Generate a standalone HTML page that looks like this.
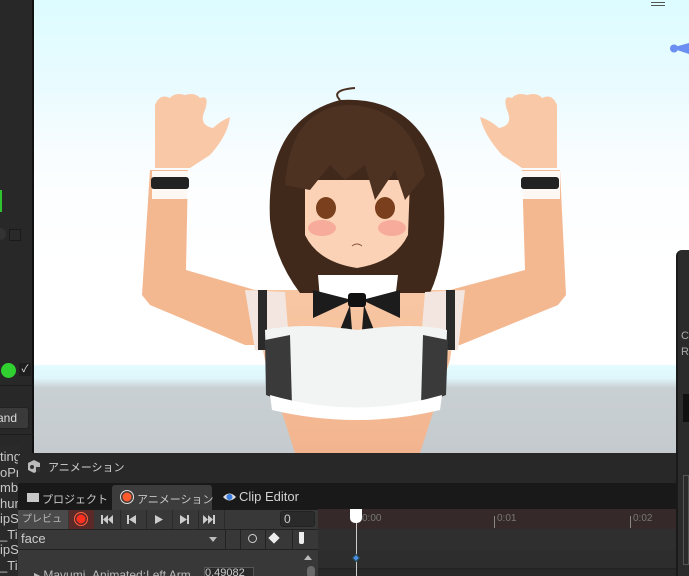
<!DOCTYPE html>
<html><head><meta charset="utf-8"><style>
*{margin:0;padding:0;box-sizing:border-box}
html,body{width:689px;height:576px;overflow:hidden}
body{background:#282828;position:relative;font-family:"Liberation Sans","Noto Sans CJK JP",sans-serif;color:#c8c8c8;font-size:12px}
.a{position:absolute}
</style></head><body>
<div class="a" style="left:0;top:0;width:33px;height:460px;background:#282828"></div>
<div class="a" style="left:32px;top:0;width:2px;height:460px;background:#111"></div>
<div class="a" style="left:0;top:190px;width:2px;height:22px;background:#2fc42f"></div>
<div class="a" style="left:-6px;top:228px;width:12px;height:12px;border-radius:6px;background:#333"></div>
<div class="a" style="left:9px;top:229px;width:12px;height:12px;border:1px solid #1a1a1a;background:#2a2a2a"></div>
<div class="a" style="left:1px;top:363px;width:15px;height:15px;border-radius:8px;background:#2fd02f"></div>
<div class="a" style="left:19px;top:363px;width:12px;height:13px;background:#1e1e1e;color:#eee;font-size:10px;line-height:13px;text-align:center">✓</div>
<div class="a" style="left:0;top:385px;width:33px;height:1px;background:#1c1c1c"></div>
<div class="a" style="left:-4px;top:407px;width:33px;height:22px;background:#3a3a3a;border:1px solid #222;border-radius:3px;font-size:12px;line-height:20px;color:#ddd">and</div>
<div class="a" style="left:0;top:434px;width:33px;height:1px;background:#1c1c1c"></div>
<div class="a" style="left:34px;top:0;width:655px;height:453px;background:linear-gradient(#dcfcff 0,#eafbff 90px,#fafdff 160px,#fff 260px,#fff 364px,#e2fbff 366px,#dff6fb 378px,#c9d0d3 388px,#c4cacd 453px)"></div>
<div class="a" style="left:651px;top:2px;width:14px;height:1px;background:#555;box-shadow:0 3px 0 #555"></div>
<svg class="a" style="left:665px;top:40px" width="24" height="18"><path d="M6 8 L24 3 L24 14 Z" fill="#6a8ef2"/><circle cx="9" cy="8.5" r="4" fill="#6a8ef2"/></svg>
<svg class="a" style="left:0;top:0" width="689" height="453">
<defs><linearGradient id="sk" x1="0" y1="0" x2="0" y2="1"><stop offset="0" stop-color="#f8c7a4"/><stop offset="1" stop-color="#f2b48e"/></linearGradient></defs>
<path d="M150 170 L188 170 L186 270 L255 290 L262 345 L245 345 L150 305 L142 295 Z" fill="#f4b891"/>
<path d="M522 170 L560 170 L566 295 L558 305 L460 345 L445 345 L450 290 L525 270 Z" fill="#f4b891"/>
<path d="M155 105 Q160 93 170 98 Q175 92 185 95 Q195 92 200 98 Q210 94 205 110 Q198 125 213 128 Q222 120 230 117 Q228 135 210 155 L190 168 L155 168 Z" fill="#f9c9a7"/>
<path d="M557 105 Q552 93 542 98 Q537 92 527 95 Q517 92 512 98 Q502 94 507 110 Q514 125 499 128 Q490 120 480 117 Q484 135 502 155 L522 168 L557 168 Z" fill="#f9c9a7"/>
<rect x="152" y="171" width="36" height="28" fill="#fff" opacity=".9"/><rect x="151" y="177" width="38" height="12" rx="3" fill="#222"/>
<rect x="522" y="171" width="38" height="28" fill="#fff" opacity=".9"/><rect x="521" y="177" width="38" height="12" rx="3" fill="#222"/>
<path d="M250 290 L460 290 L450 360 L420 453 L295 453 L265 360 Z" fill="url(#sk)"/>
<rect x="330" y="255" width="54" height="40" fill="#f2b890"/>
<path d="M270 220 Q265 120 340 100 Q420 95 442 180 Q450 250 430 293 L300 293 Q275 260 270 220 Z" fill="#40291b"/>
<path d="M305 180 L410 180 L408 235 Q395 262 357 268 Q318 262 305 235 Z" fill="#fbd2b5"/>
<ellipse cx="322" cy="228" rx="14" ry="8" fill="#f59a90" opacity=".7"/>
<ellipse cx="392" cy="228" rx="14" ry="8" fill="#f59a90" opacity=".7"/>
<ellipse cx="326" cy="208" rx="10" ry="11" fill="#7a3f1c"/>
<ellipse cx="385" cy="208" rx="10" ry="11" fill="#7a3f1c"/>
<path d="M352 246 Q357 242 362 246" stroke="#8a5040" fill="none"/>
<path d="M285 185 Q290 110 345 105 Q410 105 425 175 L405 200 L395 170 L375 200 L365 165 L345 180 L330 165 L310 190 Z" fill="#4d3121"/>
<path d="M340 100 Q330 90 355 88" stroke="#4a3020" stroke-width="2" fill="none"/>
<path d="M245 290 L285 292 L290 352 L255 350 Z" fill="#f3e6e0"/><rect x="258" y="290" width="9" height="60" fill="#2a2a2a"/>
<path d="M425 292 L465 290 L458 350 L420 352 Z" fill="#f3e6e0"/><rect x="446" y="290" width="9" height="60" fill="#2a2a2a"/>
<path d="M318 275 L398 275 L395 300 L320 300 Z" fill="#fff"/>
<path d="M313 290 L352 300 L313 318 Z M400 290 L362 300 L400 318 Z" fill="#1c1c1c"/>
<rect x="348" y="293" width="18" height="14" rx="3" fill="#111"/>
<path d="M350 305 L340 330 L352 330 Z M364 305 L374 330 L362 330 Z" fill="#1c1c1c"/>
<path d="M265 330 Q300 322 357 330 Q415 322 447 330 L445 395 Q420 412 357 408 Q295 412 267 395 Z" fill="#f2f4f4"/>
<path d="M265 340 L290 335 L292 405 L266 395 Z M448 340 L423 335 L421 405 L446 395 Z" fill="#3a3a3a"/>
<path d="M270 395 Q357 420 442 395 L440 410 Q357 430 272 410 Z" fill="#fff"/>
</svg>
<div class="a" style="left:0;top:446px;width:20px;height:130px;background:#2a2a2a;font-size:13px;line-height:15.5px;color:#c8c8c8;overflow:hidden;white-space:nowrap;padding-top:3px">ting<br>oPr<br>mb<br>hur<br>ipS<br>_Ti<br>ipS<br>_Ti</div>
<div class="a" style="left:18px;top:453px;width:671px;height:123px;background:#282828;border-radius:6px 0 0 0"></div>
<svg class="a" style="left:27px;top:459px" width="15" height="15"><path d="M7 1 L13 4 L13 11 L7 14 L1 11 L1 4 Z" fill="#bbb"/><circle cx="5" cy="8" r="2" fill="#333"/><rect x="9" y="8" width="4" height="5" fill="#333"/></svg>
<div class="a" style="left:48px;top:459px;font-size:11px;color:#d2d2d2">アニメーション</div>
<div class="a" style="left:18px;top:483px;width:671px;height:27px;background:#191919"></div>
<div class="a" style="left:112px;top:485px;width:100px;height:25px;background:#3c3c3c;border-radius:3px 3px 0 0"></div>
<div class="a" style="left:27px;top:493px;width:12px;height:9px;background:#c8c8c8"></div>
<div class="a" style="left:42px;top:491px;font-size:11px;color:#c8c8c8">プロジェクト</div>
<div class="a" style="left:120px;top:490px;width:14px;height:14px;border-radius:7px;border:1.5px solid #ddd;background:#ff5a2c;box-shadow:inset 0 0 0 1.5px #3c3c3c"></div>
<div class="a" style="left:137px;top:491px;font-size:11px;color:#c8c8c8">アニメーション</div>
<svg class="a" style="left:222px;top:491px" width="15" height="12"><path d="M1 6 Q7.5 -1 14 6 Q7.5 13 1 6Z" fill="#ddd"/><circle cx="7.5" cy="6" r="3" fill="#3a7de0"/></svg>
<div class="a" style="left:239px;top:489px;font-size:13px;color:#d2d2d2">Clip Editor</div>
<div class="a" style="left:18px;top:510px;width:300px;height:19px;background:#383838"></div>
<div class="a" style="left:18px;top:510px;width:50px;height:19px;background:#4a4a4a;font-size:10px;line-height:19px;color:#bbb;padding-left:4px">プレビュー</div>
<div class="a" style="left:69px;top:510px;width:25px;height:19px;background:#5a2a28"></div>
<div class="a" style="left:74px;top:512px;width:14px;height:14px;border-radius:7px;border:1.5px solid #ff6040;background:#ff3020;box-shadow:inset 0 0 0 1.5px #5a2a28"></div>
<svg class="a" style="left:95px;top:510px" width="130" height="19" fill="#ccc">
<rect x="25" y="0" width="1" height="19" fill="#2a2a2a"/><rect x="51" y="0" width="1" height="19" fill="#2a2a2a"/><rect x="77" y="0" width="1" height="19" fill="#2a2a2a"/><rect x="103" y="0" width="1" height="19" fill="#2a2a2a"/><rect x="129" y="0" width="1" height="19" fill="#2a2a2a"/>
<rect x="6" y="5" width="2" height="9"/><path d="M13 5 L8 9.5 L13 14Z M18 5 L13 9.5 L18 14Z"/>
<rect x="32" y="5" width="2" height="9"/><path d="M41 5 L34 9.5 L41 14Z"/>
<path d="M60 5 L68 9.5 L60 14Z"/>
<path d="M85 5 L92 9.5 L85 14Z"/><rect x="92" y="5" width="2" height="9"/>
<path d="M108 5 L113 9.5 L108 14Z M113 5 L118 9.5 L113 14Z"/><rect x="118" y="5" width="2" height="9"/>
</svg>
<div class="a" style="left:280px;top:511px;width:35px;height:16px;background:#2a2a2a;border:1px solid #222;border-radius:3px;color:#ccc;font-size:12px;line-height:14px;padding-left:3px">0</div>
<div class="a" style="left:318px;top:509px;width:358px;height:20px;background:#352a29"></div>
<div class="a" style="left:362px;top:513px;font-size:10px;color:#777">0:00</div>
<div class="a" style="left:494px;top:516px;width:1px;height:12px;background:#888"></div>
<div class="a" style="left:497px;top:513px;font-size:10px;color:#777">0:01</div>
<div class="a" style="left:630px;top:516px;width:1px;height:12px;background:#888"></div>
<div class="a" style="left:633px;top:513px;font-size:10px;color:#777">0:02</div>
<div class="a" style="left:18px;top:529px;width:300px;height:21px;background:#383838;border-top:1px solid #222;border-bottom:1px solid #222"></div>
<div class="a" style="left:21px;top:531px;font-size:13px;color:#ccc">face</div>
<div class="a" style="left:209px;top:537px;border:4px solid transparent;border-top:5px solid #bbb"></div>
<div class="a" style="left:225px;top:529px;width:1px;height:21px;background:#222"></div>
<div class="a" style="left:240px;top:529px;width:1px;height:21px;background:#222"></div>
<div class="a" style="left:265px;top:529px;width:1px;height:21px;background:#222"></div>
<div class="a" style="left:292px;top:529px;width:1px;height:21px;background:#222"></div>
<div class="a" style="left:248px;top:534px;width:9px;height:9px;border:1px solid #ccc;border-radius:5px"></div>
<div class="a" style="left:270px;top:534px;width:8px;height:8px;background:#eee;transform:rotate(45deg)"></div>
<div class="a" style="left:299px;top:532px;width:5px;height:12px;background:#eee;border-radius:0 0 2px 2px"></div>
<div class="a" style="left:318px;top:529px;width:358px;height:21px;background:#2f2f2f"></div>
<div class="a" style="left:318px;top:550px;width:358px;height:19px;background:#2d2d2d;border-bottom:1px solid #232323"></div>
<div class="a" style="left:18px;top:550px;width:300px;height:26px;background:#383838"></div>
<div class="a" style="left:304px;top:555px;border:4px solid transparent;border-bottom:5px solid #bbb;border-top:0"></div>
<div class="a" style="left:307px;top:566px;width:8px;height:12px;border-radius:4px;background:#6a6a6a"></div>
<div class="a" style="left:34px;top:568px;font-size:12px;color:#bbb;white-space:nowrap">▸ Mavumi_Animated:Left Arm</div>
<div class="a" style="left:204px;top:567px;width:50px;height:12px;background:#2a2a2a;border:1px solid #555;font-size:11px;color:#ccc;line-height:11px">0.49082</div>
<div class="a" style="left:356px;top:509px;width:1px;height:67px;background:#ccc"></div>
<div class="a" style="left:350px;top:509px;width:12px;height:14px;background:#fff;border-radius:0 0 5px 5px"></div>
<div class="a" style="left:353px;top:555px;width:6px;height:6px;background:#4a8ee8;transform:rotate(45deg);border:1px solid #244"></div>
<div class="a" style="left:676px;top:250px;width:13px;height:326px;background:#2b2b2b;border-radius:6px 0 0 0;border-left:2px solid #1a1a1a"></div>
<div class="a" style="left:681px;top:330px;font-size:11px;color:#aaa">C<br><span style="line-height:20px">R</span></div>
<div class="a" style="left:683px;top:394px;width:6px;height:28px;background:#111"></div>
<div class="a" style="left:683px;top:475px;width:6px;height:90px;border:1px solid #555"></div>
</body></html>
